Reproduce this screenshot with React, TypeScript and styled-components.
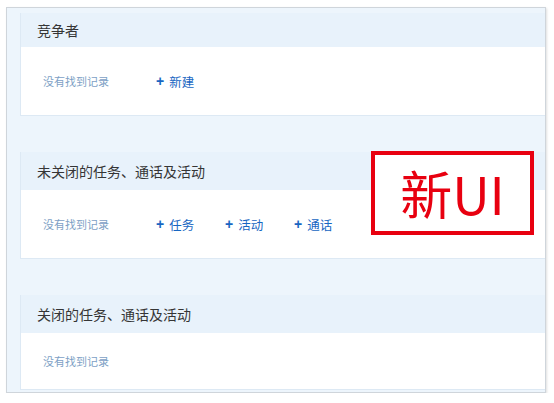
import React from "react";
import styled, { createGlobalStyle } from "styled-components";

const GlobalStyle = createGlobalStyle`
    html, body {
        margin: 0;
        padding: 0;
        background: #ffffff;
        font-family: "Noto Sans CJK SC", "Noto Sans", sans-serif;
    }
`;

const Frame = styled.div`
    position: relative;
    margin: 7px 0 0 6px;
    width: 538px;
    height: 384px;
    border: 1px solid #cfd5db;
    background-color: #edf5fc;
    box-shadow: 1px 1px 2px rgba(0, 0, 0, 0.12);
    overflow: hidden;
`;

const CardList = styled.div`
    display: flex;
    flex-direction: column;
    gap: 36px;
    padding: 5px 0 0 13px;
`;

const Card = styled.section`
    display: flex;
    flex-direction: column;
    border: 1px solid #dde9f4;
    border-right: none;
    border-top: none;
    background-color: #ffffff;
`;

const CardHeader = styled.header<{ $height: number }>`
    display: flex;
    align-items: center;
    height: ${(p) => p.$height}px;
    padding-left: 16px;
    background-color: #e8f2fb;
    color: #353535;
    font-size: 14px;
`;

const CardBody = styled.div<{ $height: number }>`
    display: flex;
    align-items: center;
    height: ${(p) => p.$height}px;
    padding-left: 22px;
`;

const EmptyText = styled.span`
    width: 113px;
    color: #7d9fc5;
    font-size: 11px;
`;

const ActionLink = styled.a`
    display: inline-flex;
    align-items: center;
    gap: 5px;
    width: 69px;
    color: #1766c2;
    font-size: 12.5px;
    cursor: pointer;
`;

const Plus = styled.span`
    font-family: "Liberation Sans", sans-serif;
    font-weight: bold;
    font-size: 14px;
`;

const Stamp = styled.div`
    position: absolute;
    left: 364px;
    top: 143px;
    width: 155px;
    height: 76px;
    display: flex;
    align-items: center;
    justify-content: center;
    border: 4px solid #e80010;
    background: #ffffff;
    color: #e80010;
    font-size: 52px;
    line-height: 1;
`;

type Section = { title: string; actions: string[]; headerHeight: number; bodyHeight: number };

const sections: Section[] = [
    { title: "竞争者", actions: ["新建"], headerHeight: 34, bodyHeight: 68 },
    { title: "未关闭的任务、通话及活动", actions: ["任务", "活动", "通话"], headerHeight: 38, bodyHeight: 68 },
    { title: "关闭的任务、通话及活动", actions: [], headerHeight: 38, bodyHeight: 56 },
];

export default function App() {
    return (
        <>
            <GlobalStyle />
            <Frame>
                <CardList>
                    {sections.map((s) => (
                        <Card key={s.title}>
                            <CardHeader $height={s.headerHeight}>{s.title}</CardHeader>
                            <CardBody $height={s.bodyHeight}>
                                <EmptyText>没有找到记录</EmptyText>
                                {s.actions.map((a) => (
                                    <ActionLink key={a}>
                                        <Plus>+</Plus>
                                        {a}
                                    </ActionLink>
                                ))}
                            </CardBody>
                        </Card>
                    ))}
                </CardList>
                <Stamp>新UI</Stamp>
            </Frame>
        </>
    );
}
